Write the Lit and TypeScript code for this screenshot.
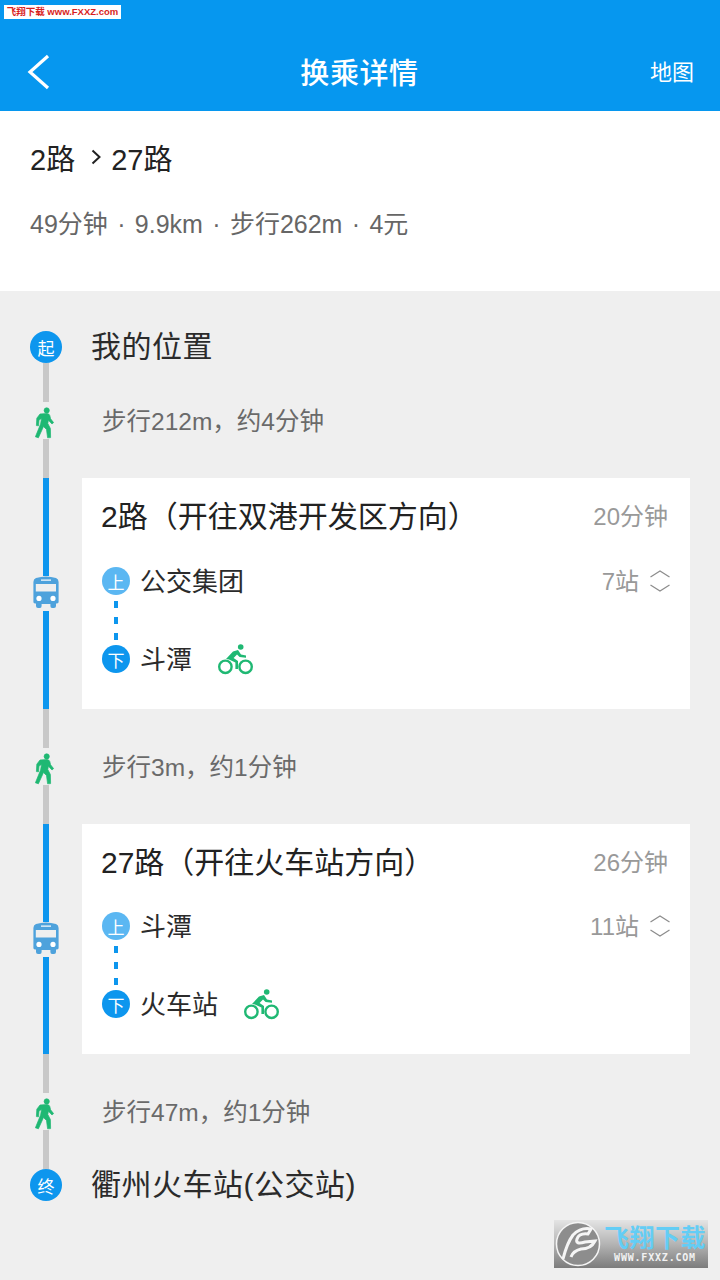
import { LitElement, css, html, svg } from 'lit';
import { customElement } from 'lit/decorators.js';

const walkIcon = html`<svg class="walk" viewBox="0 -1 22 32" width="22" height="32">
  ${svg`<g fill="#1fb873" stroke="#1fb873" stroke-width="0.7" stroke-linejoin="round">
    <circle cx="11.7" cy="2.4" r="2.6"/>
    <path d="M5 6 L12 5.5 Q14 5.5 14.8 7.5 L15.6 10.8 L18.6 14.6 L17 16 L13.4 12.2 L12.8 15.5 L15.4 20.5 L15.6 29.6 L12.6 29.8 L11.5 21.5 L8.5 18.5 L3.4 29.8 L0.4 28.8 L5.6 16 L6.5 10.5 L4 12 L3.6 17.8 L1.4 17.6 L1.8 10.2 Z"/>
  </g>`}
</svg>`;

const busIcon = html`<svg class="bus" viewBox="0 0 26 32" width="26" height="32">
  ${svg`<path fill="#4ea2dc" fill-rule="evenodd" d="M3 2 Q13 -1 23 2 Q25.6 3 25.6 6 L25.6 26 Q25.6 27.4 24 27.4 L23 27.4 L23 30 Q23 32 21 32 L19 32 Q17.4 32 17.4 30 L17.4 28 L8.6 28 L8.6 30 Q8.6 32 7 32 L5 32 Q3 32 3 30 L3 27.4 L2 27.4 Q0.4 27.4 0.4 26 L0.4 6 Q0.4 3 3 2 Z M2.8 8 L2.8 15.4 L23 15.4 L23 8 Z"/>
  <rect x="8" y="3.4" width="10" height="1.5" fill="#fff" opacity=".8"/>
  <circle cx="6" cy="22.4" r="2.6" fill="#fff"/>
  <circle cx="20" cy="22.4" r="2.6" fill="#fff"/>`}
</svg>`;

const bikeIcon = html`<svg class="bike" viewBox="0 0 35 31" width="35" height="31">
  ${svg`<g fill="none" stroke="#1fb873" stroke-width="2.4">
    <circle cx="7.4" cy="22.8" r="6.2"/>
    <circle cx="27.6" cy="22.8" r="6.2"/>
  </g>
  <circle cx="22.7" cy="3" r="2.8" fill="#1fb873"/>
  <path d="M8 15 L15 7.5 L20 6 L23 10.6 L28 11.6 L28 13.8 L21.6 13 L19 10.6 L15.6 14 L20 17 L20 25 L17.4 25 L17.4 18.6 L11 15.6 Z" fill="#1fb873"/>`}
</svg>`;

const expandIcon = html`<svg class="expand" viewBox="0 0 20 22" width="20" height="22">
  ${svg`<path d="M0.5 7 L10 1 L19.5 7 M0.5 15 L10 21 L19.5 15" fill="none" stroke="#8c8c8c" stroke-width="1.2"/>`}
</svg>`;

type Leg = {
  title: string;
  time: string;
  stops: string;
  from: string;
  to: string;
  height: number;
  gap: number;
};

const legs: Leg[] = [
  { title: '2路（开往双港开发区方向）', time: '20分钟', stops: '7站', from: '公交集团', to: '斗潭', height: 231, gap: 13 },
  { title: '27路（开往火车站方向）', time: '26分钟', stops: '11站', from: '斗潭', to: '火车站', height: 230, gap: 12 },
];

@customElement('app-root')
export class AppRoot extends LitElement {
  static styles = css`
    :host {
      display: block;
      position: relative;
      width: 720px;
      height: 1280px;
      overflow: hidden;
      background: #efefef;
      font-family: 'Liberation Sans', 'Noto Sans CJK SC', sans-serif;
      color: #222;
    }

    .header {
      height: 78px;
      padding-top: 33px;
      background: #0697ef;
      color: #fff;
      display: grid;
      grid-template-columns: 120px 1fr 120px;
      align-items: center;
    }
    .back {
      margin-left: 27px;
      display: block;
    }
    .header-title {
      text-align: center;
      font-size: 29px;
      font-weight: 500;
      letter-spacing: 0.6px;
      margin: -2px 0 0 -1px;
    }
    .header-action {
      text-align: right;
      padding-right: 26px;
      font-size: 22px;
      margin-top: -4px;
    }

    .summary {
      height: 180px;
      background: #fff;
      padding: 0 30px;
      box-sizing: border-box;
    }
    .route {
      display: flex;
      align-items: center;
      height: 92px;
      margin-bottom: 4px;
      font-size: 29px;
    }
    .route svg {
      margin: 0 10px 0 16px;
    }
    .meta {
      font-size: 25px;
      line-height: 34px;
      color: #666;
    }
    .sep {
      display: inline-block;
      width: 27px;
      text-align: center;
    }

    .timeline {
      padding-top: 40px;
    }
    .row {
      display: grid;
      grid-template-columns: 32px 1fr;
      column-gap: 20px;
      margin-left: 30px;
      margin-right: 30px;
    }
    .rail {
      display: flex;
      flex-direction: column;
      align-items: center;
    }
    .line {
      flex: 1;
      width: 6px;
      background: #c8c8c8;
    }
    .line.blue {
      background: #0d96ee;
    }
    .walk {
      display: block;
      flex: none;
      margin-top: 5px;
    }
    .bus {
      display: block;
      flex: none;
      margin: 0 0 3px;
    }

    .stop {
      grid-template-rows: 32px;
      height: 32px;
      align-items: center;
    }
    .stop-badge {
      width: 32px;
      height: 32px;
      border-radius: 50%;
      background: #0d96ee;
      color: #fff;
      font-size: 17px;
      display: flex;
      align-items: center;
      justify-content: center;
    }
    .stop-name {
      margin-left: 9px;
      font-size: 30px;
      line-height: 32px;
      letter-spacing: 0.5px;
      color: #2b2b2b;
    }

    .walk-row {
      height: 115px;
    }
    .walk-text {
      align-self: center;
      margin-left: 20px;
      margin-top: -2px;
      font-size: 24.5px;
      color: #6a6a6a;
    }

    .card {
      background: #fff;
      padding: 0 20px;
      box-sizing: border-box;
    }
    .card-head {
      height: 76px;
      padding-right: 2px;
      display: flex;
      align-items: center;
      justify-content: space-between;
    }
    .card-title {
      font-size: 30px;
      margin: -4px 0 0 -1px;
      color: #222;
    }
    .muted {
      font-size: 24px;
      margin-top: -4px;
      color: #999;
    }
    .board {
      height: 28px;
      display: flex;
      align-items: center;
    }
    .dot {
      flex: none;
      width: 28px;
      height: 28px;
      border-radius: 50%;
      background: #0d96ee;
      color: #fff;
      font-size: 17px;
      display: flex;
      align-items: center;
      justify-content: center;
      margin-right: 10px;
    }
    .dot.light {
      background: #5bb7f2;
    }
    .stop-label {
      font-size: 26px;
      margin-top: -4px;
      color: #2b2b2b;
    }
    .stops {
      margin-left: auto;
      display: flex;
      align-items: center;
      gap: 11px;
    }
    .expand {
      display: block;
    }
    .dashes {
      width: 28px;
      height: 50px;
      display: flex;
      flex-direction: column;
      align-items: center;
      justify-content: center;
      gap: 9px;
    }
    .dashes i {
      display: block;
      width: 4px;
      height: 7px;
      background: #0d96ee;
    }
    .bike {
      display: block;
      margin-left: 26px;
    }

    /* 水印，压在页面上面 */
    .mark-top {
      position: absolute;
      left: 4px;
      top: 5px;
      width: 117px;
      height: 14px;
      background: #fff;
      color: #d81e1e;
      font-size: 9.5px;
      font-weight: 700;
      line-height: 14px;
      text-align: center;
      white-space: nowrap;
    }
    .mark-logo {
      position: absolute;
      left: 554px;
      top: 1220px;
      width: 154px;
      height: 48px;
      background: linear-gradient(#e4e4e4, #b4b4b4 50%, #7c7c7c);
      display: flex;
      align-items: center;
    }
    .mark-logo svg {
      flex: none;
      margin-left: 1px;
    }
    .mark-text {
      margin-left: 3px;
      display: flex;
      flex-direction: column;
      align-items: center;
    }
    .mark-cn {
      font-size: 25px;
      line-height: 28px;
      font-weight: 700;
      color: #63cdf5;
      letter-spacing: 0.5px;
    }
    .mark-en {
      font-family: 'DejaVu Sans Mono', monospace;
      font-size: 10px;
      line-height: 12px;
      font-weight: 700;
      color: #f2f2f2;
      letter-spacing: 0.8px;
    }
  `;

  private renderLeg(leg: Leg) {
    return html`<div class="row" style="height: ${leg.height}px">
      <div class="rail">
        <div class="line blue"></div>
        ${busIcon}
        <div class="line blue"></div>
      </div>
      <div class="card">
        <div class="card-head">
          <span class="card-title">${leg.title}</span>
          <span class="muted">${leg.time}</span>
        </div>
        <div class="board" style="margin-top: ${leg.gap}px">
          <span class="dot light">上</span>
          <span class="stop-label">${leg.from}</span>
          <span class="stops">
            <span class="muted">${leg.stops}</span>
            ${expandIcon}
          </span>
        </div>
        <div class="dashes"><i></i><i></i><i></i></div>
        <div class="board">
          <span class="dot">下</span>
          <span class="stop-label">${leg.to}</span>
          ${bikeIcon}
        </div>
      </div>
    </div>`;
  }

  private renderWalk(text: string) {
    return html`<div class="row walk-row">
      <div class="rail">
        <div class="line"></div>
        ${walkIcon}
        <div class="line"></div>
      </div>
      <div class="walk-text">${text}</div>
    </div>`;
  }

  render() {
    return html`
      <div class="header">
        <svg class="back" viewBox="0 0 24 36" width="24" height="36">
          <path d="M21 2 L3 18 L21 34" fill="none" stroke="#fff" stroke-width="3.2" />
        </svg>
        <div class="header-title">换乘详情</div>
        <div class="header-action">地图</div>
      </div>

      <div class="summary">
        <div class="route">
          <span>2路</span>
          <svg viewBox="0 0 10 16" width="10" height="16">
            <path d="M1.5 1.5 L8.5 8 L1.5 14.5" fill="none" stroke="#222" stroke-width="2" />
          </svg>
          <span>27路</span>
        </div>
        <div class="meta">49分钟<span class="sep">·</span>9.9km<span class="sep">·</span>步行262m<span class="sep">·</span>4元</div>
      </div>

      <div class="timeline">
        <div class="row stop">
          <div class="stop-badge">起</div>
          <div class="stop-name">我的位置</div>
        </div>
        ${this.renderWalk('步行212m，约4分钟')}
        ${this.renderLeg(legs[0])}
        ${this.renderWalk('步行3m，约1分钟')}
        ${this.renderLeg(legs[1])}
        ${this.renderWalk('步行47m，约1分钟')}
        <div class="row stop">
          <div class="stop-badge">终</div>
          <div class="stop-name">衢州火车站(公交站)</div>
        </div>
      </div>

      <div class="mark-top">飞翔下载 www.FXXZ.com</div>
      <div class="mark-logo">
        <svg viewBox="0 0 46 46" width="46" height="46">
          <circle cx="23" cy="23" r="21.5" fill="#8d8d8d" stroke="#f5f5f5" stroke-width="1.5" />
          <path d="M8 38 Q12 22 18 14 Q26 6 36 8 L33 13 Q24 12 22 18 Q20 24 30 21 L40 20 Q36 28 26 28 Q18 30 16 36" fill="none" stroke="#f5f5f5" stroke-width="3" />
        </svg>
        <div class="mark-text">
          <span class="mark-cn">飞翔下载</span>
          <span class="mark-en">WWW.FXXZ.COM</span>
        </div>
      </div>
    `;
  }
}
